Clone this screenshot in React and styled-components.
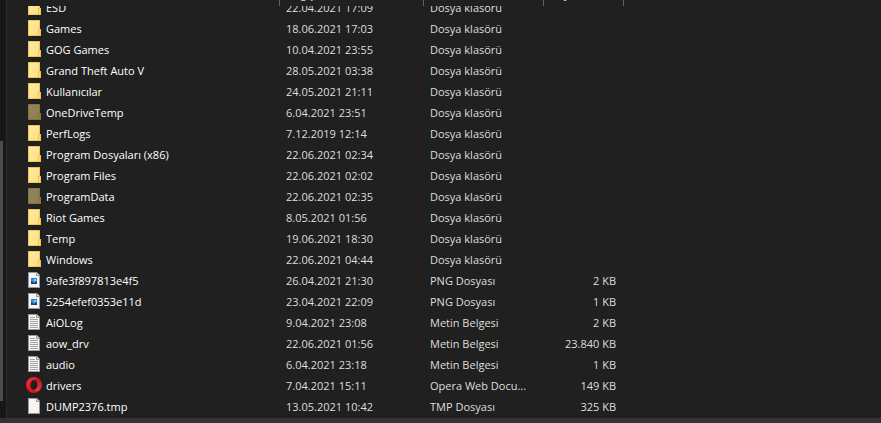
import React from 'react';
import styled, { createGlobalStyle } from 'styled-components';

const GlobalStyle = createGlobalStyle`
    * {
        box-sizing: border-box;
    }

    body {
        margin: 0;
        background-color: #202020;
        color: #dedede;
        font-family: "Open Sans", "Noto Sans", sans-serif;
        font-size: 11px;
        line-height: 20px;
    }
`;

const Window = styled.div`
    display: flex;
    flex-direction: column;
    height: 100vh;
    overflow: hidden;
`;

const Main = styled.main`
    display: flex;
    flex: 1;
    min-height: 0;
`;

const NavEdge = styled.aside`
    display: flex;
    flex-direction: column;
    width: 7px;
    padding-right: 3px;
    background-color: #171717;
    border-right: 1px solid #2b2b2b;
`;

const Space = styled.div`
    flex: ${({size}) => size};
`;

const Thumb = styled.div`
    flex: 260;
    background-color: #4d4d4d;
`;

const Pane = styled.section`
    display: flex;
    flex-direction: column;
    flex: 1;
    min-width: 0;
`;

const Header = styled.div`
    display: flex;
    align-items: flex-end;
    height: 6px;
    overflow: hidden;
`;

const HeaderButton = styled.button`
    flex: 0 0 ${({width}) => width}px;
    height: 24px;
    padding: 0 0 0 ${({indent}) => indent || 6}px;
    border: 0;
    border-right: 1px solid #636363;
    background: none;
    color: inherit;
    font: inherit;
    text-align: left;
`;

const Scroll = styled.div`
    display: flex;
    flex: 1;
    flex-direction: column;
    justify-content: flex-end;
    overflow: hidden;
`;

const Table = styled.table`
    flex: none;
    width: 100%;
    table-layout: fixed;
    border-collapse: collapse;
`;

const Col = styled.col`
    width: ${({size}) => size};
`;

const Cell = styled.td`
    height: 21px;
    padding: 0 8px 0 6px;
    vertical-align: top;
    text-align: ${({align}) => align || 'left'};
    white-space: nowrap;
`;

const NameCell = styled(Cell)`
    padding-left: 19px;
    color: #fff;
`;

const Name = styled.div`
    display: flex;
    align-items: flex-start;
    gap: 4px;
`;

const Icon = styled.svg`
    flex: none;
    width: 16px;
    height: 16px;
    margin-top: 1px;
    opacity: ${({$hidden}) => $hidden ? .5 : 1};
`;

const StatusBar = styled.footer`
    height: 5px;
    background-color: #333;
`;

const FolderIcon = ({ hidden }) => (
    <Icon viewBox="0 0 16 16" $hidden={hidden} aria-hidden="true">
        <defs>
            <linearGradient id="folder" x1="0" y1="0" x2="1" y2="1">
                <stop offset="0" stopColor="#ffe9a6" />
                <stop offset="1" stopColor="#ffdf7e" />
            </linearGradient>
        </defs>
        <path d="M2 0H14V9H15V16H2Z" fill="#ecc64f" />
        <path d="M3 1H13V9H12V15H3Z" fill="url(#folder)" />
        <path d="M13 10H14V15H13Z" fill="#ffdf80" />
    </Icon>
);

const Page = () => (
    <>
        <path d="M2 0H11L14 3V16H2Z" fill="#9a9a9a" />
        <path d="M3 1H10V4H13V15H3Z" fill="#f5f5f5" />
        <path d="M11 1L13 3H11Z" fill="#e3e3e3" />
    </>
);

const FileIcon = () => (
    <Icon viewBox="0 0 16 16" aria-hidden="true">
        <Page />
    </Icon>
);

const TextIcon = () => (
    <Icon viewBox="0 0 16 16" aria-hidden="true">
        <Page />
        <path d="M4 3.5H9M4 5.5H12M4 7.5H12M4 9.5H12M4 11.5H12M4 13.5H12" stroke="#a3a3a3" />
    </Icon>
);

const ImageIcon = () => (
    <Icon viewBox="0 0 16 16" aria-hidden="true">
        <defs>
            <linearGradient id="sky" x1="0" y1="0" x2="0" y2="1">
                <stop offset="0" stopColor="#2a7fd0" />
                <stop offset="1" stopColor="#4fb0ee" />
            </linearGradient>
        </defs>
        <Page />
        <path d="M5 6H11V12H5Z" fill="url(#sky)" />
        <path d="M5 9L6 9L8 11L10 9L11 10V12H5Z" fill="#15477f" />
        <path d="M8 7H10V9H8Z" fill="#8fd0f7" />
    </Icon>
);

const OperaIcon = () => (
    <Icon viewBox="0 0 16 16" aria-hidden="true">
        <defs>
            <linearGradient id="opera" x1="0" y1="0" x2="1" y2="1">
                <stop offset="0" stopColor="#ff2a38" />
                <stop offset=".5" stopColor="#e01824" />
                <stop offset="1" stopColor="#c40f1c" />
            </linearGradient>
            <linearGradient id="operaSide" x1="0" y1="0" x2="0" y2="1">
                <stop offset="0" stopColor="#a80d18" />
                <stop offset="1" stopColor="#f4605c" />
            </linearGradient>
        </defs>
        <path
            fill="url(#opera)"
            fillRule="evenodd"
            d="M8 0A8 8 0 1 0 8 16A8 8 0 1 0 8 0ZM8 3C10.2 3 11.5 5.2 11.5 8S10.2 13 8 13S4.5 10.8 4.5 8S5.8 3 8 3Z"
        />
        <path d="M8 3C11 0 15.5 3.5 15.5 8S11 16 8 13C10.2 13 11.5 10.8 11.5 8S10.2 3 8 3Z" fill="url(#operaSide)" opacity=".6" />
    </Icon>
);

const icons = {
    folder: FolderIcon,
    file: FileIcon,
    text: TextIcon,
    image: ImageIcon,
    opera: OperaIcon,
};

const folder = (name, date, hidden) => ({ name, date, hidden, icon: 'folder', type: 'Dosya klasörü' });

const files = [
    folder('ESD', '22.04.2021 17:09'),
    folder('Games', '18.06.2021 17:03'),
    folder('GOG Games', '10.04.2021 23:55'),
    folder('Grand Theft Auto V', '28.05.2021 03:38'),
    folder('Kullanıcılar', '24.05.2021 21:11'),
    folder('OneDriveTemp', '6.04.2021 23:51', true),
    folder('PerfLogs', '7.12.2019 12:14'),
    folder('Program Dosyaları (x86)', '22.06.2021 02:34'),
    folder('Program Files', '22.06.2021 02:02'),
    folder('ProgramData', '22.06.2021 02:35', true),
    folder('Riot Games', '8.05.2021 01:56'),
    folder('Temp', '19.06.2021 18:30'),
    folder('Windows', '22.06.2021 04:44'),
    { name: '9afe3f897813e4f5', date: '26.04.2021 21:30', icon: 'image', type: 'PNG Dosyası', size: '2 KB' },
    { name: '5254efef0353e11d', date: '23.04.2021 22:09', icon: 'image', type: 'PNG Dosyası', size: '1 KB' },
    { name: 'AiOLog', date: '9.04.2021 23:08', icon: 'text', type: 'Metin Belgesi', size: '2 KB' },
    { name: 'aow_drv', date: '22.06.2021 01:56', icon: 'text', type: 'Metin Belgesi', size: '23.840 KB' },
    { name: 'audio', date: '6.04.2021 23:18', icon: 'text', type: 'Metin Belgesi', size: '1 KB' },
    { name: 'drivers', date: '7.04.2021 15:11', icon: 'opera', type: 'Opera Web Docu...', size: '149 KB' },
    { name: 'DUMP2376.tmp', date: '13.05.2021 10:42', icon: 'file', type: 'TMP Dosyası', size: '325 KB' },
];

const FileRow = ({ file }) => {
    const TypeIcon = icons[file.icon];

    return (
        <tr>
            <NameCell>
                <Name>
                    <TypeIcon hidden={file.hidden} />
                    <span>{file.name}</span>
                </Name>
            </NameCell>
            <Cell>{file.date}</Cell>
            <Cell>{file.type}</Cell>
            <Cell align="right">{file.size}</Cell>
            <td />
        </tr>
    );
};

const App = () => (
    <>
        <GlobalStyle />
        <Window>
            <Main>
                <NavEdge>
                    <Space size={141} />
                    <Thumb />
                    <Space size={17} />
                </NavEdge>
                <Pane>
                    <Header>
                        <HeaderButton width={273} indent={39}>Ad</HeaderButton>
                        <HeaderButton width={144}>Değiştirme tarihi</HeaderButton>
                        <HeaderButton width={120}>Tür</HeaderButton>
                        <HeaderButton width={80}>Boyut</HeaderButton>
                    </Header>
                    <Scroll>
                        <Table>
                            <colgroup>
                                <Col size="273px" />
                                <Col size="144px" />
                                <Col size="120px" />
                                <Col size="80px" />
                                <Col size="auto" />
                            </colgroup>
                            <tbody>
                                {files.map(file => <FileRow key={file.name} file={file} />)}
                            </tbody>
                        </Table>
                    </Scroll>
                </Pane>
            </Main>
            <StatusBar />
        </Window>
    </>
);

export default App;
